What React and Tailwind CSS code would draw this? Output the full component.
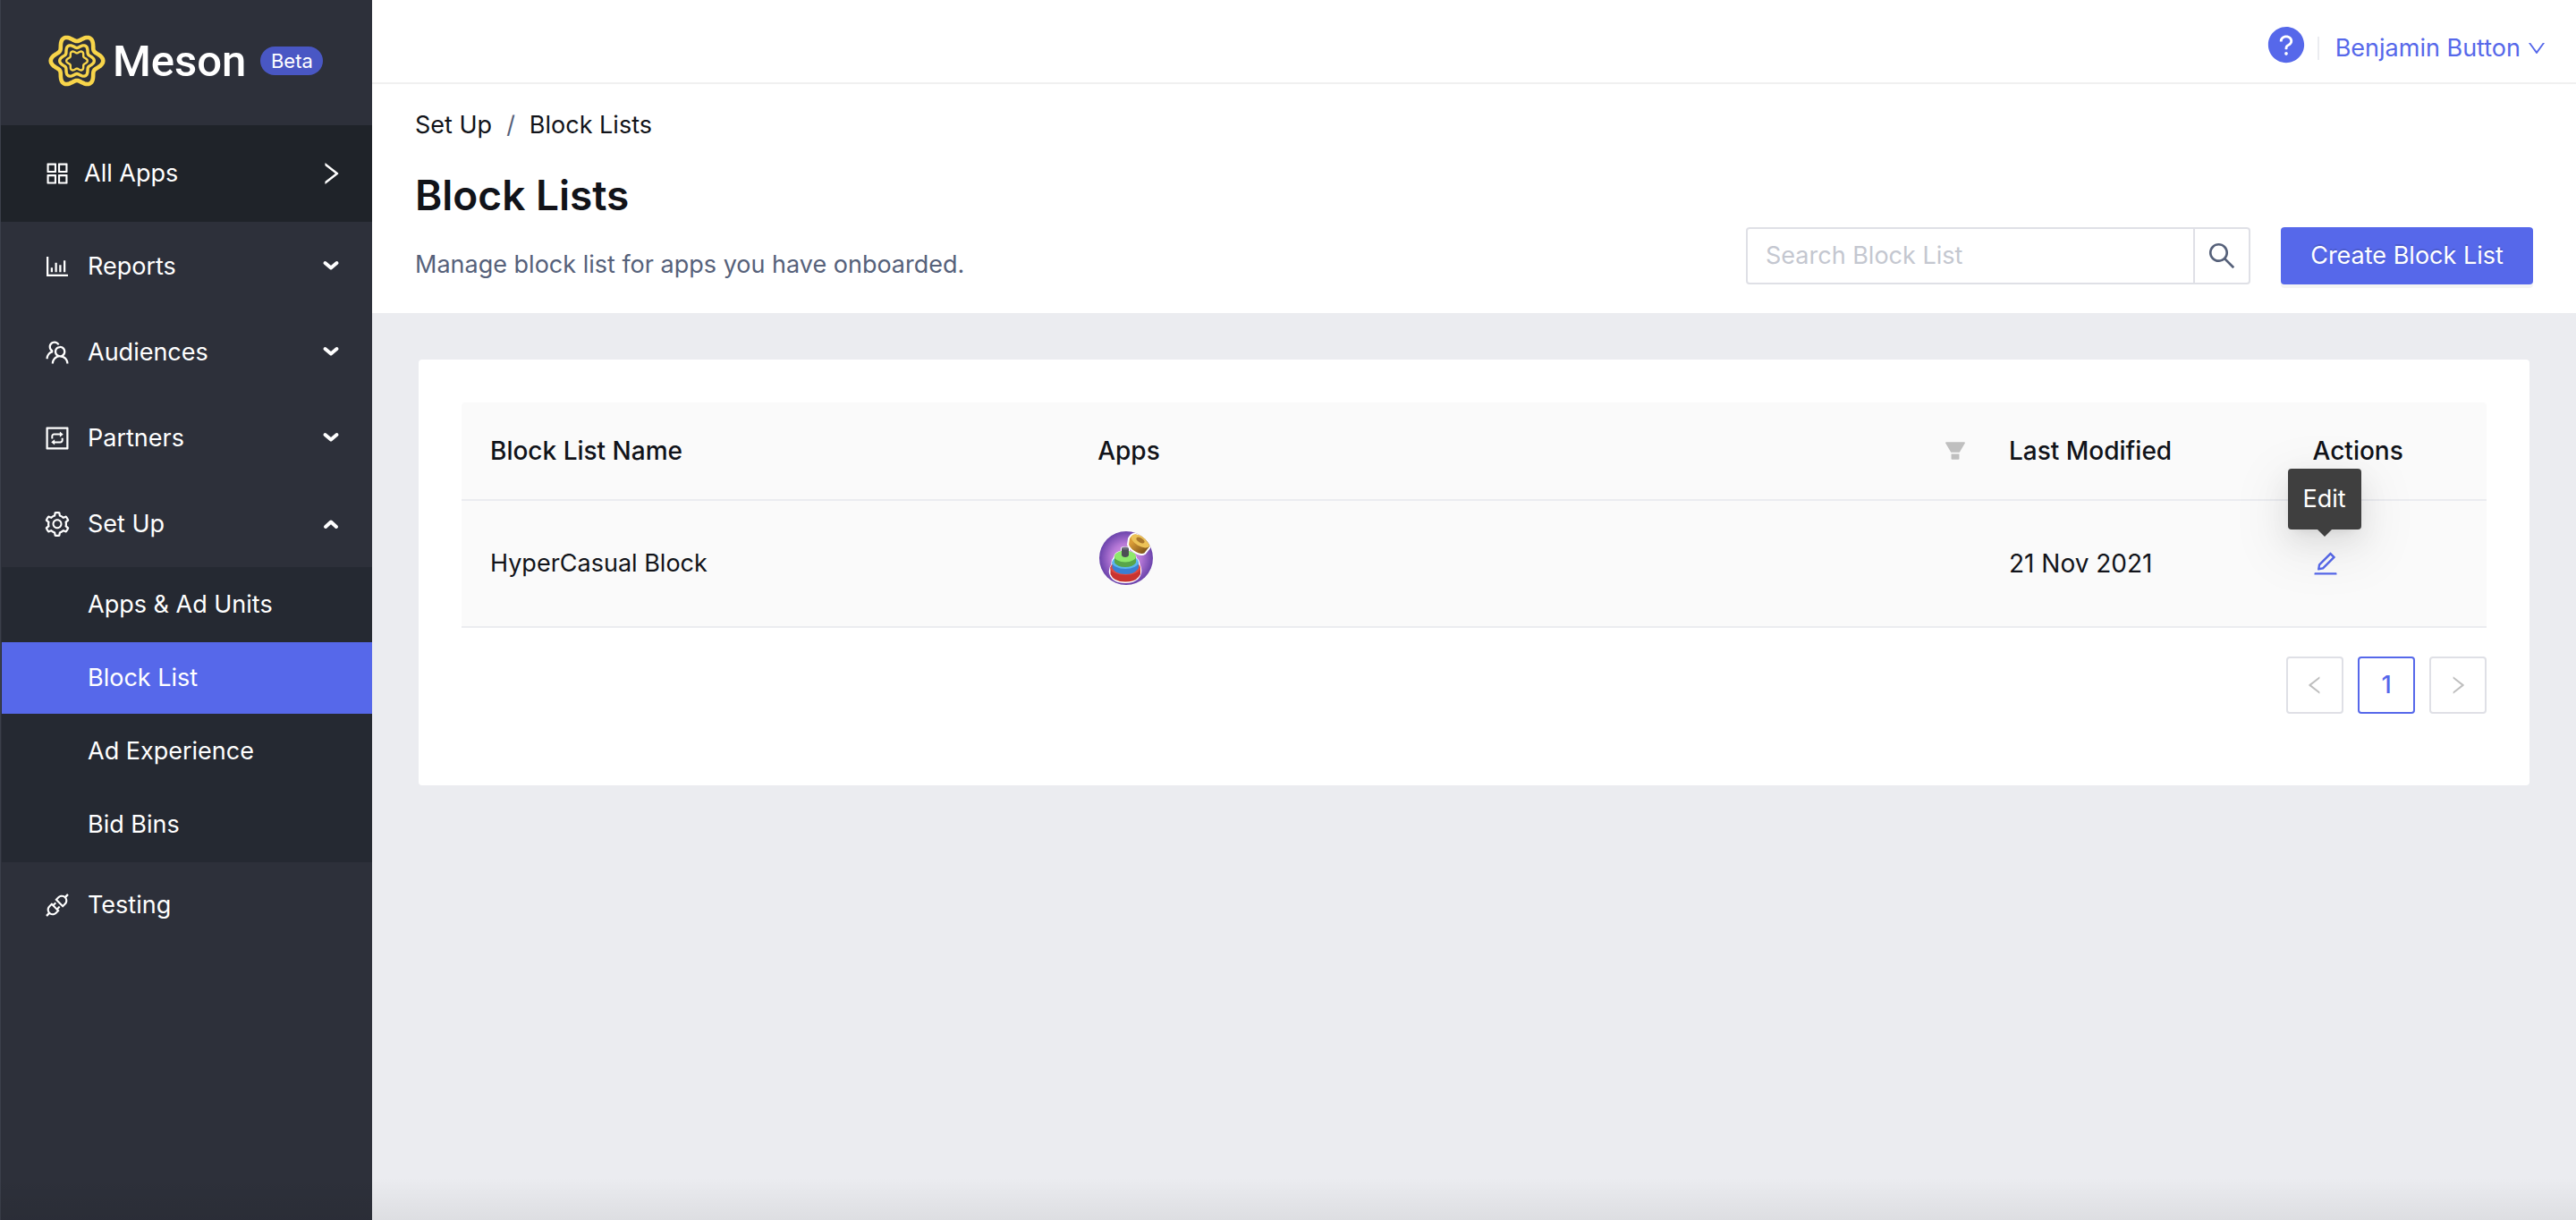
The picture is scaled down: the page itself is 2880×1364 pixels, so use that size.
import { useState } from "react";
import {
  AiFillFilter,
  AiFillQuestionCircle,
  AiOutlineApi,
  AiOutlineAppstore,
  AiOutlineBarChart,
  AiOutlineDown,
  AiOutlineEdit,
  AiOutlineInteraction,
  AiOutlineLeft,
  AiOutlineRight,
  AiOutlineSearch,
  AiOutlineSetting,
  AiOutlineTeam,
} from "react-icons/ai";

const MENU = [
  { label: "Reports", icon: AiOutlineBarChart },
  { label: "Audiences", icon: AiOutlineTeam },
  { label: "Partners", icon: AiOutlineInteraction },
  {
    label: "Set Up",
    icon: AiOutlineSetting,
    children: ["Apps & Ad Units", "Block List", "Ad Experience", "Bid Bins"],
  },
];

const BLOCK_LISTS = [{ name: "HyperCasual Block", modified: "21 Nov 2021" }];

// Closed six-lobed ring around (32, 32)
const ring = (radius, wave) => {
  const points = [];
  for (let deg = 0; deg < 360; deg += 4) {
    const t = (deg * Math.PI) / 180;
    const r = radius + wave * Math.cos(6 * t);
    points.push(
      `${(32 + r * Math.cos(t)).toFixed(2)} ${(32 + r * Math.sin(t)).toFixed(2)}`
    );
  }
  return `M${points.join("L")}Z`;
};

const Logo = () => (
  <svg
    viewBox="0 0 64 64"
    className="size-16 shrink-0"
    fill="none"
    stroke="#f8d54a"
    strokeLinejoin="round"
    aria-hidden="true"
  >
    <path d={ring(25.6, 3.7)} strokeWidth="4.6" />
    <path d={ring(16.9, 2.4)} strokeWidth="3.4" />
    <path d={ring(10.2, 1.6)} strokeWidth="2.4" />
  </svg>
);

const Caret = ({ open }) => (
  <svg
    viewBox="0 0 20 14"
    className="h-3.5 w-5"
    fill="none"
    stroke="currentColor"
    strokeWidth="4"
    strokeLinecap="round"
    strokeLinejoin="round"
    aria-hidden="true"
  >
    <path d={open ? "M4 10L10 4.500L16 10" : "M3.500 3L10 8.500L16.500 3"} />
  </svg>
);

const AppIcon = () => (
  <svg
    viewBox="0 0 60 60"
    className="size-[60px]"
    role="img"
    aria-label="Ring stacking game"
  >
    <defs>
      <radialGradient id="app-bg">
        <stop offset="0" stopColor="#eda6ee" />
        <stop offset="0.55" stopColor="#b577d6" />
        <stop offset="1" stopColor="#6a43ab" />
      </radialGradient>
      <linearGradient id="app-ring" x1="0" y1="0" x2="1" y2="1">
        <stop offset="0.3" stopColor="#d99b36" />
        <stop offset="1" stopColor="#5e3c10" />
      </linearGradient>
      <clipPath id="app-clip">
        <circle cx="30" cy="30" r="30" />
      </clipPath>
    </defs>
    <g clipPath="url(#app-clip)">
      <rect width="60" height="60" fill="url(#app-bg)" />
      <path
        d="M24 22V19Q24 17 29 17T34 19V22Q41 24 42 30Q45 32 45.500 37Q48 41 47 47Q44 58 29 58T11 47Q10 41 13.500 37Q13 32 16 29Q17 23 24 22Z"
        fill="#fff"
      />
      <path d="M12.500 40V48Q16 56.500 29 56.500T46 48V40Z" fill="#c93430" />
      <ellipse cx="29.200" cy="41" rx="16.800" ry="8" fill="#e04a42" />
      <path d="M14.500 34V41Q18 48 29 48T44 41V34Z" fill="#3b7fd3" />
      <ellipse cx="29.200" cy="34.500" rx="14.800" ry="7.500" fill="#5bb5ee" />
      <path d="M17 28V35Q20 40 29 40T41 35V28Z" fill="#58a54a" />
      <ellipse cx="29" cy="28" rx="12" ry="6.500" fill="#8de86c" />
      <path d="M25 19V27Q26 29 29 29T33 27V19Z" fill="#4d4d55" />
      <ellipse cx="29" cy="19" rx="4" ry="1.600" fill="#6b6d78" />
      <path
        d="M33 8Q36 2 41 2.500Q53 5 57 15Q58 17 55 20L51 25Q48 27 43 25Q34 21 32 15Z"
        fill="url(#app-ring)"
        stroke="#fff"
        strokeWidth="2"
      />
      <ellipse
        cx="46"
        cy="11"
        rx="11.500"
        ry="5.500"
        transform="rotate(30 46 11)"
        fill="#ecc257"
      />
      <ellipse
        cx="46"
        cy="10"
        rx="5"
        ry="2.500"
        transform="rotate(30 46 10)"
        fill="#a9772c"
      />
    </g>
  </svg>
);

const Sidebar = ({ active, onSelect }) => {
  const [openMenu, setOpenMenu] = useState("Set Up");

  return (
    <aside className="w-[416px] shrink-0 border-l border-[#3b3f4a] bg-[#2d303a] text-white">
      <div className="flex h-[140px] items-center pb-1 pl-[53px]">
        <Logo />
        <span className="ml-2 font-['Roboto',sans-serif] text-[49px] leading-none font-medium">
          Meson
        </span>
        <span className="ml-4 flex h-8 w-[70px] items-center justify-center rounded-full bg-[#4957c4] text-[22px]">
          Beta
        </span>
      </div>

      <button
        type="button"
        className="flex h-[108px] w-full items-center bg-[#1f2329] pr-[30px] pl-[47px]"
      >
        <AiOutlineAppstore className="size-8" />
        <span className="ml-3.5">All Apps</span>
        <AiOutlineRight className="ml-auto size-8" />
      </button>

      <nav className="pt-0.5">
        <ul>
          {MENU.map(({ label, icon: Icon, children }) => {
            const open = openMenu === label;
            return (
              <li key={label}>
                <button
                  type="button"
                  aria-expanded={open}
                  onClick={() => setOpenMenu(open ? "" : label)}
                  className="flex h-24 w-full items-center pr-9 pl-[47px]"
                >
                  <Icon className="size-8" />
                  <span className="ml-[18px]">{label}</span>
                  <span className="ml-auto">
                    <Caret open={open} />
                  </span>
                </button>
                {open && children && (
                  <ul className="ml-px flex flex-col gap-0.5 bg-[#252932] py-0.5">
                    {children.map((child) => (
                      <li key={child}>
                        <a
                          href="#"
                          onClick={() => onSelect(child)}
                          aria-current={child === active ? "page" : undefined}
                          className={`flex h-20 items-center pl-24 ${
                            child === active ? "bg-[#5668ea]" : ""
                          }`}
                        >
                          {child}
                        </a>
                      </li>
                    ))}
                  </ul>
                )}
              </li>
            );
          })}
          <li>
            <a href="#" className="flex h-24 items-center pl-[47px]">
              <AiOutlineApi className="size-8" />
              <span className="ml-[18px]">Testing</span>
            </a>
          </li>
        </ul>
      </nav>
    </aside>
  );
};

const TopBar = () => (
  <header className="flex h-[94px] items-center justify-end border-b-2 border-[#f0f0f0] bg-white pr-8 text-[#5668ea]">
    <button type="button" aria-label="Help" className="mt-2">
      <AiFillQuestionCircle className="size-[46px]" />
    </button>
    <span className="mt-4 ml-3 h-[26px] w-0.5 bg-[#ebecf0]" />
    <button type="button" className="mt-4 ml-[18px] flex items-center gap-1.5">
      Benjamin Button
      <AiOutlineDown className="size-6" />
    </button>
  </header>
);

const PageHeader = () => (
  <section className="flex items-end justify-between bg-white pt-6 pr-12 pb-8 pl-12">
    <div>
      <nav aria-label="Breadcrumb">
        <ol className="flex gap-4 leading-[44px]">
          <li>
            <a href="#">Set Up</a>
          </li>
          <li className="text-[#56617a]" aria-hidden="true">
            /
          </li>
          <li>Block Lists</li>
        </ol>
      </nav>
      <h1 className="mt-5 text-[46px] leading-[72px] font-semibold">
        Block Lists
      </h1>
      <p className="mt-5 leading-[44px] text-[#56617a]">
        Manage block list for apps you have onboarded.
      </p>
    </div>

    <div className="flex h-16 gap-[34px]">
      <form
        onSubmit={(e) => e.preventDefault()}
        className="flex w-[564px] rounded-sm border-2 border-[#dfe0e6]"
      >
        <input
          type="text"
          aria-label="Search Block List"
          placeholder="Search Block List"
          className="min-w-0 flex-1 px-5 outline-none placeholder:text-[#c4c7d0]"
        />
        <button
          type="submit"
          aria-label="Search"
          className="flex w-[62px] items-center justify-center border-l-2 border-[#dfe0e6] text-[#56617a]"
        >
          <AiOutlineSearch className="size-9" />
        </button>
      </form>
      <button
        type="button"
        className="w-[282px] rounded-sm bg-[#5668ea] text-white shadow-[0_4px_0_rgba(0,0,0,0.045)] text-shadow-[0_-2px_0_rgba(0,0,0,0.12)]"
      >
        Create Block List
      </button>
    </div>
  </section>
);

const EditAction = () => (
  <span className="relative flex w-7 justify-center">
    <button type="button" aria-label="Edit" className="text-[#5668ea]">
      <AiOutlineEdit className="size-8" />
    </button>
    <span
      role="tooltip"
      className="absolute -left-7 bottom-full mb-[22px] flex h-[68px] w-[82px] items-center justify-center rounded-sm bg-[#3f3f3f] text-white shadow-[0_6px_12px_-8px_rgba(0,0,0,0.12),0_12px_32px_rgba(0,0,0,0.08),0_18px_56px_16px_rgba(0,0,0,0.05)]"
    >
      Edit
      <span className="absolute top-full border-x-8 border-t-8 border-x-transparent border-t-[#3f3f3f]" />
    </span>
  </span>
);

const BlockListTable = () => (
  <table className="w-full table-fixed border-separate border-spacing-0 text-left">
    <thead className="text-[28px]">
      <tr className="h-[110px] bg-[#fafafa] *:border-b-2 *:border-[#ebecf0] *:px-8 *:font-medium">
        <th className="w-[30%] rounded-tl-sm">Block List Name</th>
        <th className="w-[45%]">
          <div className="flex items-center justify-between">
            Apps
            <button
              type="button"
              aria-label="Filter apps"
              className="-mr-[18px] text-[#bfbfbf]"
            >
              <AiFillFilter className="size-7" />
            </button>
          </div>
        </th>
        <th className="w-[15%]">Last Modified</th>
        <th className="w-[10%] rounded-tr-sm">Actions</th>
      </tr>
    </thead>
    <tbody>
      {BLOCK_LISTS.map(({ name, modified }) => (
        <tr
          key={name}
          className="h-[142px] bg-[#fafafa] *:border-b-2 *:border-[#ebecf0]"
        >
          <td className="px-8">{name}</td>
          <td className="px-[34px] pb-3">
            <AppIcon />
          </td>
          <td className="px-8 text-[28px]">{modified}</td>
          <td className="px-8">
            <EditAction />
          </td>
        </tr>
      ))}
    </tbody>
  </table>
);

const Pagination = () => (
  <nav aria-label="Pagination" className="mt-8 flex justify-end gap-4">
    <button
      type="button"
      disabled
      aria-label="Previous page"
      className="flex size-16 items-center justify-center rounded-sm border-2 border-[#dfe0e6] text-[#bfbfbf]"
    >
      <AiOutlineLeft className="size-[26px]" />
    </button>
    <button
      type="button"
      aria-current="page"
      className="size-16 rounded-sm border-2 border-[#5668ea] font-medium text-[#5668ea]"
    >
      1
    </button>
    <button
      type="button"
      disabled
      aria-label="Next page"
      className="flex size-16 items-center justify-center rounded-sm border-2 border-[#dfe0e6] text-[#bfbfbf]"
    >
      <AiOutlineRight className="size-[26px]" />
    </button>
  </nav>
);

export default function App() {
  const [active, setActive] = useState("Block List");

  return (
    <div className="relative flex min-h-screen bg-[#ebecf0] font-['Inter',sans-serif] text-[27px] leading-[44px] text-[#111319]">
      <Sidebar active={active} onSelect={setActive} />
      <div className="min-w-0 flex-1">
        <TopBar />
        <PageHeader />
        <main className="m-[52px] rounded-sm bg-white px-12 pt-12 pb-20">
          <BlockListTable />
          <Pagination />
        </main>
      </div>
      {/* soft shade along the bottom edge of the window */}
      <div className="pointer-events-none absolute inset-x-0 bottom-0 h-12 bg-linear-to-t from-black/6 to-transparent" />
    </div>
  );
}
